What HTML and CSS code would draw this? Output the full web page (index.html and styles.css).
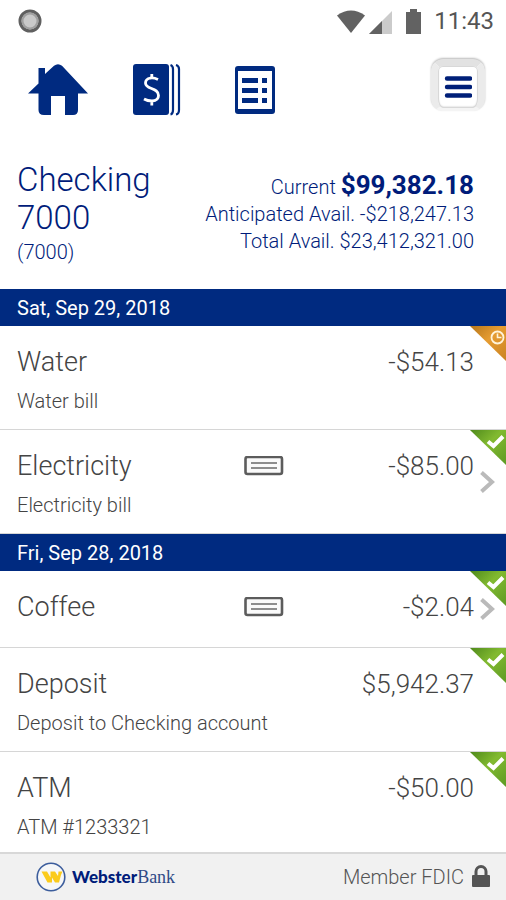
FILE: index.html
```html
<!DOCTYPE html>
<html lang="en">
<head>
<meta charset="utf-8">
<meta name="viewport" content="width=device-width, initial-scale=1">
<title>Checking 7000</title>
<link rel="stylesheet" href="styles.css">
</head>
<body>
<svg class="defs" aria-hidden="true">
  <defs>
    <linearGradient id="green" x1="0" y1="0" x2="1" y2="1">
      <stop offset="0" stop-color="#4f8a1c"/><stop offset=".45" stop-color="#82ba30"/><stop offset="1" stop-color="#5d9a24"/>
    </linearGradient>
    <linearGradient id="orange" x1="0" y1="0" x2="1" y2="1">
      <stop offset="0" stop-color="#b5761b"/><stop offset=".45" stop-color="#e69c31"/><stop offset="1" stop-color="#c98222"/>
    </linearGradient>
    <symbol id="cleared" viewBox="0 0 36 35">
      <path d="M0 0H36V35Z" fill="url(#green)"/>
      <path d="M18 11.500l5.500 4.500 9.500-9.500" fill="none" stroke="#fff" stroke-width="4"/>
    </symbol>
    <symbol id="pending" viewBox="0 0 36 35">
      <path d="M0 0H36V35Z" fill="url(#orange)"/>
      <circle cx="27.500" cy="11.500" r="6" fill="none" stroke="#fff3d8" stroke-width="1.800"/>
      <path d="M27.500 7.500v4h4" fill="none" stroke="#fff3d8" stroke-width="1.600"/>
    </symbol>
    <symbol id="check" viewBox="0 0 40 20">
      <rect x="1.500" y="1" width="36.500" height="17" rx="2" fill="#fafafa" stroke="#5c5c5c" stroke-width="2.600"/>
      <path d="M7 7h26M7 12h26" stroke="#8d8d8d" stroke-width="1.800"/>
    </symbol>
    <symbol id="chevron" viewBox="0 0 16 24">
      <path d="M1.500 2.500l10.500 9.500L1.500 21.500" fill="none" stroke="#bababa" stroke-width="4"/>
    </symbol>
  </defs>
</svg>

<div class="status">
  <svg class="status-dot" viewBox="0 0 24 24" aria-hidden="true"><circle cx="12" cy="12" r="10" fill="#c9c9c9" stroke="#606060" stroke-width="3"/><circle cx="12" cy="12" r="7.500" fill="none" stroke="#a0a0a0" stroke-width="2"/></svg>
  <svg class="status-icons" viewBox="0 0 86 26" aria-hidden="true">
    <path d="M0 7.500Q14-2.500 28 7.500L14 25Z" fill="#626262"/>
    <path d="M32 26L55 3V26Z" fill="#cbcbcb"/>
    <path d="M32 26L45 13V26Z" fill="#626262"/>
    <path d="M69 4h4V1h7v3h4v22H69Z" fill="#626262"/>
  </svg>
  <time>11:43</time>
</div>

<nav class="toolbar">
  <a href="#home" aria-label="Home"><svg class="ic-home" viewBox="0 0 60 52" aria-hidden="true"><path d="M0 29.500L10.500 19.500V4H17V10L26 1.800Q30-1.500 34 1.800L60 29.500H50V46Q50 51 45 51H37V32H23V51H16Q10.500 51 10.500 46V29.500Z"/></svg></a>
  <a href="#accounts" aria-label="Accounts"><svg class="ic-cards" viewBox="0 0 48 52" aria-hidden="true">
    <rect x="0" y="0" width="36" height="51" rx="3"/>
    <path d="M37.500 1Q40 2 40 5V46Q40 50 37.500 50.500M43 1Q46 2 46 5V46Q46 50 43 50.500" fill="none" stroke="#002a80" stroke-width="2.200"/>
    <path d="M25 15.500Q21 13.500 17.500 14Q12.500 15 12.500 19C12.500 26 25.500 23 25.500 31.500Q25.500 36.500 19 37Q14.500 37 11 35M18.800 10V14.500M18.800 36.500V41.500" fill="none" stroke="#fff" stroke-width="2.800"/>
  </svg></a>
  <a href="#details" aria-label="Details"><svg class="ic-list" viewBox="0 0 40 48" aria-hidden="true">
    <rect x="0" y="0" width="40" height="48" rx="3"/>
    <rect x="3" y="5" width="34" height="38" fill="#fff"/>
    <path d="M7 12h16v5H7zM27 12h5v5h-5zM7 22h16v5H7zM27 22h5v5h-5zM7 32h16v5H7zM27 32h5v5h-5z"/>
  </svg></a>
  <button class="menu" type="button" aria-label="Menu"><svg viewBox="0 0 28 24" aria-hidden="true"><path d="M3 3.500h23M3 12h23M3 20.500h23" stroke="#001f78" stroke-width="4.400" stroke-linecap="round"/></svg></button>
</nav>

<header class="account">
  <div class="account-name">
    <h1>Checking 7000</h1>
    <p>(7000)</p>
  </div>
  <div class="balances">
    <p>Current <strong>$99,382.18</strong></p>
    <p>Anticipated Avail. -$218,247.13</p>
    <p>Total Avail. $23,412,321.00</p>
  </div>
</header>

<main>
  <section>
    <h2>Sat, Sep 29, 2018</h2>
    <ul>
      <li>
        <span class="name">Water</span><span class="amount">-$54.13</span>
        <span class="memo">Water bill</span>
        <svg class="corner" role="img" aria-label="Pending"><use href="#pending"/></svg>
      </li>
      <li>
        <span class="name">Electricity</span><svg class="check" role="img" aria-label="Check"><use href="#check"/></svg><span class="amount">-$85.00</span>
        <span class="memo">Electricity bill</span>
        <svg class="corner" role="img" aria-label="Cleared"><use href="#cleared"/></svg>
        <a class="more" href="#electricity" aria-label="Open Electricity"><svg aria-hidden="true"><use href="#chevron"/></svg></a>
      </li>
    </ul>
  </section>
  <section>
    <h2>Fri, Sep 28, 2018</h2>
    <ul>
      <li>
        <span class="name">Coffee</span><svg class="check" role="img" aria-label="Check"><use href="#check"/></svg><span class="amount">-$2.04</span>
        <svg class="corner" role="img" aria-label="Cleared"><use href="#cleared"/></svg>
        <a class="more" href="#coffee" aria-label="Open Coffee"><svg aria-hidden="true"><use href="#chevron"/></svg></a>
      </li>
      <li>
        <span class="name">Deposit</span><span class="amount">$5,942.37</span>
        <span class="memo">Deposit to Checking account</span>
        <svg class="corner" role="img" aria-label="Cleared"><use href="#cleared"/></svg>
      </li>
      <li>
        <span class="name">ATM</span><span class="amount">-$50.00</span>
        <span class="memo">ATM #1233321</span>
        <svg class="corner" role="img" aria-label="Cleared"><use href="#cleared"/></svg>
      </li>
    </ul>
  </section>
</main>

<footer>
  <div class="brand">
    <svg viewBox="0 0 30 30" aria-hidden="true">
      <circle cx="15" cy="15" r="13.800" fill="#f6f7f8" stroke="#3c5d9c" stroke-width="1.600"/>
      <path d="M5.500 9.500h5.500l3.500 6V9.500h4.500l3 4.500.5-4.500H26.500L25 13l-2 7.500h-4L16 15.500v5h-4.500Z" fill="#fbcb1c"/>
    </svg>
    <span class="brand-name"><b>Webster</b><span>Bank</span></span>
  </div>
  <div class="fdic">
    <span>Member FDIC</span>
    <svg viewBox="0 0 18 23" aria-hidden="true"><path d="M4 11V6.500a5 5 0 0 1 10 0V11" fill="none" stroke="#555" stroke-width="3"/><rect x="0" y="10" width="18" height="12" rx="1" fill="#555"/></svg>
  </div>
</footer>
</body>
</html>
```
FILE: styles.css
```css
* { box-sizing: border-box; }

body {
  margin: 0;
  min-height: 100vh;
  display: flex;
  flex-direction: column;
  background: #fff;
  color: #444;
  font-family: Roboto, "Liberation Sans", sans-serif;
  font-weight: 400;
}

h1, h2, p, ul { margin: 0; padding: 0; font-weight: inherit; }
svg { display: block; }
.defs { position: absolute; width: 0; height: 0; }

.status {
  display: flex;
  align-items: center;
  height: 40px;
  padding: 2px 12px 0 18px;
}
.status-dot { width: 24px; height: 24px; }
.status-icons { width: 86px; height: 26px; margin-left: auto; }
.status time { margin-left: 11px; font-size: 24px; line-height: 38px; color: #555; }

.toolbar {
  display: flex;
  align-items: center;
  height: 100px;
  padding: 0 21px 0 28px;
}
.toolbar a svg { fill: #002a80; }
.ic-home { width: 60px; height: 52px; }
.ic-cards { width: 48px; height: 52px; margin-left: 45px; }
.ic-list { width: 40px; height: 48px; margin-left: 54px; }
.menu {
  width: 54px;
  height: 52px;
  margin: 0 0 10px auto;
  padding: 0;
  display: grid;
  place-items: center;
  border: 7px solid #ebebeb;
  border-top-color: #e2e2e2;
  border-bottom: 3px solid #f4f4f4;
  border-radius: 12px;
  background: #fff;
  box-shadow: inset 0 0 0 1px #d8d8d8, inset 0 -1px 2px #bbb, 0 -1px 2px #bbb;
}
.menu svg { width: 28px; height: 24px; }

.account {
  display: flex;
  justify-content: space-between;
  padding: 21px 32px 21px 17px;
  color: #001c7a;
}
.account-name { width: min-content; }
.account h1 { font-size: 33px; line-height: 38px; font-weight: 300; }
.account-name p { font-size: 20px; line-height: 31px; font-weight: 300; }
.balances { padding-top: 11px; text-align: right; font-size: 20px; line-height: 27px; font-weight: 300; }
.balances strong { font-size: 26px; font-weight: 700; }

h2 {
  padding: 2px 17px 0;
  background: #002a80;
  color: #fff;
  font-size: 20px;
  line-height: 35px;
}

ul { list-style: none; }
li {
  position: relative;
  display: grid;
  grid-template-columns: 227fr 40fr 190fr;
  align-content: start;
  align-items: center;
  row-gap: 9px;
  min-height: 77px;
  padding: 18px 32px 16px 17px;
  border-bottom: 1px solid #d6d6d6;
}
section:last-child li:last-child { padding-bottom: 13px; border: 0; }
.name, .amount { font-size: 26px; line-height: 36px; font-weight: 300; }
.name { font-size: 27px; }
.amount { grid-column: 3; text-align: right; }
.check { width: 40px; height: 20px; }
.memo { grid-column: 1 / -1; font-size: 20px; line-height: 24px; font-weight: 300; }
.corner { position: absolute; top: 0; right: 0; width: 36px; height: 35px; }
.more { position: absolute; right: 10px; top: 50%; margin-top: -12px; }
.more svg { width: 16px; height: 24px; }

footer {
  display: flex;
  align-items: center;
  justify-content: space-between;
  height: 49px;
  margin-top: auto;
  padding: 0 16px 2px 36px;
  border-top: 2px solid #d8d8d8;
  background: #f1f1f1;
}
.brand { display: flex; align-items: center; gap: 6px; font-size: 17px; color: #001c7a; }
.brand svg { width: 30px; height: 30px; }
.brand-name b { font-family: Lato, sans-serif; font-weight: 900; }
.brand-name span { font-family: "Liberation Serif", serif; font-size: 18px; color: #2f4a86; }
.fdic { display: flex; align-items: center; gap: 8px; font-size: 20px; font-weight: 300; color: #555; }
.fdic svg { width: 18px; height: 23px; }
```
